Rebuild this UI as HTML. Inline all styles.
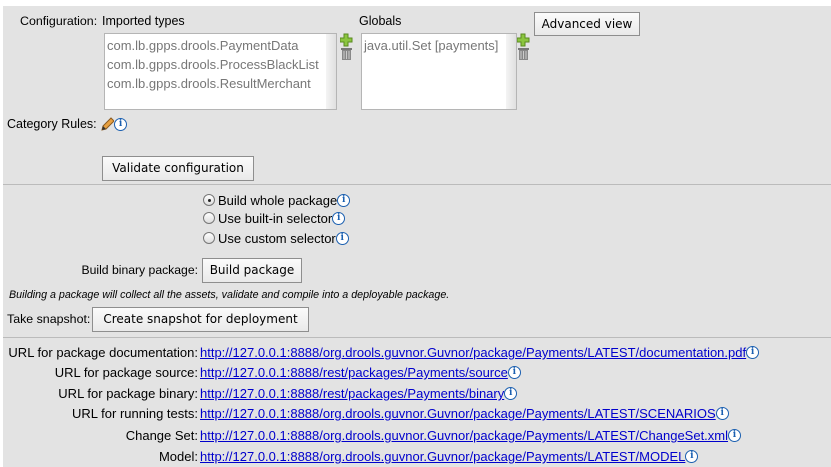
<!DOCTYPE html>
<html><head><meta charset="utf-8"><style>
body{margin:0;width:831px;height:467px;background:#fff;overflow:hidden;font-family:"Liberation Sans",Arial,sans-serif;font-size:13px;color:#000}
#bg{position:absolute;left:3px;top:6px;right:0;bottom:0;background:#e3e3e3}
.a{position:absolute;white-space:nowrap;line-height:15px}
.box{position:absolute;background:#fff;border:1px solid #b5b5b5}
.sb{position:absolute;top:0;bottom:0;right:0;width:10px;background:linear-gradient(90deg,#f4f4f4,#e0e0e0)}
.it{color:#777;font-size:13px}
.btn{position:absolute;background:linear-gradient(#fbfbfb,#e9e9e9);border:1px solid #8e8e8e;font-family:"DejaVu Sans",sans-serif;font-size:12px;line-height:22px;text-align:center;box-sizing:border-box;white-space:nowrap}
.hr{position:absolute;left:3px;right:0;height:1px;background:#bbb}
.i{display:inline-block;box-sizing:border-box;width:13px;height:13px;border:1.5px solid #1a5fb0;border-radius:50%;color:#1a5fb0;font:bold 9px/10px "DejaVu Serif",serif;text-align:center;vertical-align:top;margin-top:1px;background:#fff;text-decoration:none}
.rd{display:inline-block;width:12px;height:12px;box-sizing:border-box;border:1px solid #777;border-radius:50%;background:linear-gradient(#fff,#ddd);vertical-align:top;margin-top:1px;margin-right:3px;position:relative}
.rd.on::after{content:"";position:absolute;left:3.5px;top:3.5px;width:3px;height:3px;border-radius:50%;background:#222}
.lab{position:absolute;right:633px;text-align:right;white-space:nowrap;line-height:15px}
.lnk{position:absolute;left:200px;white-space:nowrap;line-height:15px}
.lnk a{color:#00c;text-decoration:underline}
</style></head><body>
<div id="bg"></div>
<div class="a" style="left:20px;top:14px;font-size:12.4px">Configuration:</div>
<div class="a" style="left:102px;top:14px;font-size:12.5px">Imported types</div>
<div class="box" style="left:104px;top:33px;width:231px;height:75px"><div class="sb"></div>
<div class="a it" style="left:2px;top:4px">com.lb.gpps.drools.PaymentData</div>
<div class="a it" style="left:2px;top:23px">com.lb.gpps.drools.ProcessBlackList</div>
<div class="a it" style="left:2px;top:42px">com.lb.gpps.drools.ResultMerchant</div></div>
<svg class="a" style="left:340px;top:33px" width="13" height="28"><path d="M4 1h4v4h4v4H8v4H4V9H0V5h4z" fill="#8bc53f" stroke="#5a8a1f"/><rect x="2" y="16" width="9" height="11" fill="#888"/><rect x="1" y="15" width="11" height="2" fill="#777"/><path d="M4 18v8M6.5 18v8M9 18v8" stroke="#ccc"/></svg>
<div class="a" style="left:359px;top:14px;font-size:12.5px">Globals</div>
<div class="box" style="left:361px;top:33px;width:154px;height:75px"><div class="sb"></div>
<div class="a it" style="left:2px;top:4px">java.util.Set [payments]</div></div>
<svg class="a" style="left:517px;top:33px" width="13" height="28"><path d="M4 1h4v4h4v4H8v4H4V9H0V5h4z" fill="#8bc53f" stroke="#5a8a1f"/><rect x="2" y="16" width="9" height="11" fill="#888"/><rect x="1" y="15" width="11" height="2" fill="#777"/><path d="M4 18v8M6.5 18v8M9 18v8" stroke="#ccc"/></svg>
<div class="btn" style="left:534px;top:12px;width:106px;height:24px">Advanced view</div>
<div class="a" style="left:7px;top:117px;font-size:12.5px">Category Rules: <svg width="14" height="14" style="vertical-align:top"><path d="M2 13l1-4 8-8 3 3-8 8z" fill="#e8a040" stroke="#8a5a20"/><path d="M2 13l1-4 3 3z" fill="#333"/></svg><span class="i">i</span></div>
<div class="btn" style="left:102px;top:156px;width:152px;height:25px;line-height:23px">Validate configuration</div>
<div class="hr" style="top:184px"></div>
<div class="a" style="left:203px;top:193px"><span class="rd on"></span>Build whole package<span class="i">i</span></div>
<div class="a" style="left:203px;top:211px"><span class="rd"></span>Use built-in selector<span class="i">i</span></div>
<div class="a" style="left:203px;top:231px"><span class="rd"></span>Use custom selector<span class="i">i</span></div>
<div class="lab" style="top:263px;font-size:12.2px">Build binary package:</div>
<div class="btn" style="left:202px;top:258px;width:100px;height:25px;line-height:23px">Build package</div>
<div class="a" style="left:9px;top:288px;font-size:10.7px;font-style:italic">Building a package will collect all the assets, validate and compile into a deployable package.</div>
<div class="a" style="left:7px;top:312px;font-size:12.4px">Take snapshot:</div>
<div class="btn" style="left:92px;top:307px;width:217px;height:25px;line-height:23px">Create snapshot for deployment</div>
<div class="hr" style="top:337px"></div>
<div class="lab" style="top:345px">URL for package documentation:</div><div class="lnk" style="top:345px"><a>http://127.0.0.1:8888/org.drools.guvnor.Guvnor/package/Payments/LATEST/documentation.pdf</a><span class="i">i</span></div>
<div class="lab" style="top:365px">URL for package source:</div><div class="lnk" style="top:365px"><a>http://127.0.0.1:8888/rest/packages/Payments/source</a><span class="i">i</span></div>
<div class="lab" style="top:386px">URL for package binary:</div><div class="lnk" style="top:386px"><a>http://127.0.0.1:8888/rest/packages/Payments/binary</a><span class="i">i</span></div>
<div class="lab" style="top:406px">URL for running tests:</div><div class="lnk" style="top:406px"><a>http://127.0.0.1:8888/org.drools.guvnor.Guvnor/package/Payments/LATEST/SCENARIOS</a><span class="i">i</span></div>
<div class="lab" style="top:428px">Change Set:</div><div class="lnk" style="top:428px"><a>http://127.0.0.1:8888/org.drools.guvnor.Guvnor/package/Payments/LATEST/ChangeSet.xml</a><span class="i">i</span></div>
<div class="lab" style="top:449px">Model:</div><div class="lnk" style="top:449px"><a>http://127.0.0.1:8888/org.drools.guvnor.Guvnor/package/Payments/LATEST/MODEL</a><span class="i">i</span></div>
</body></html>
